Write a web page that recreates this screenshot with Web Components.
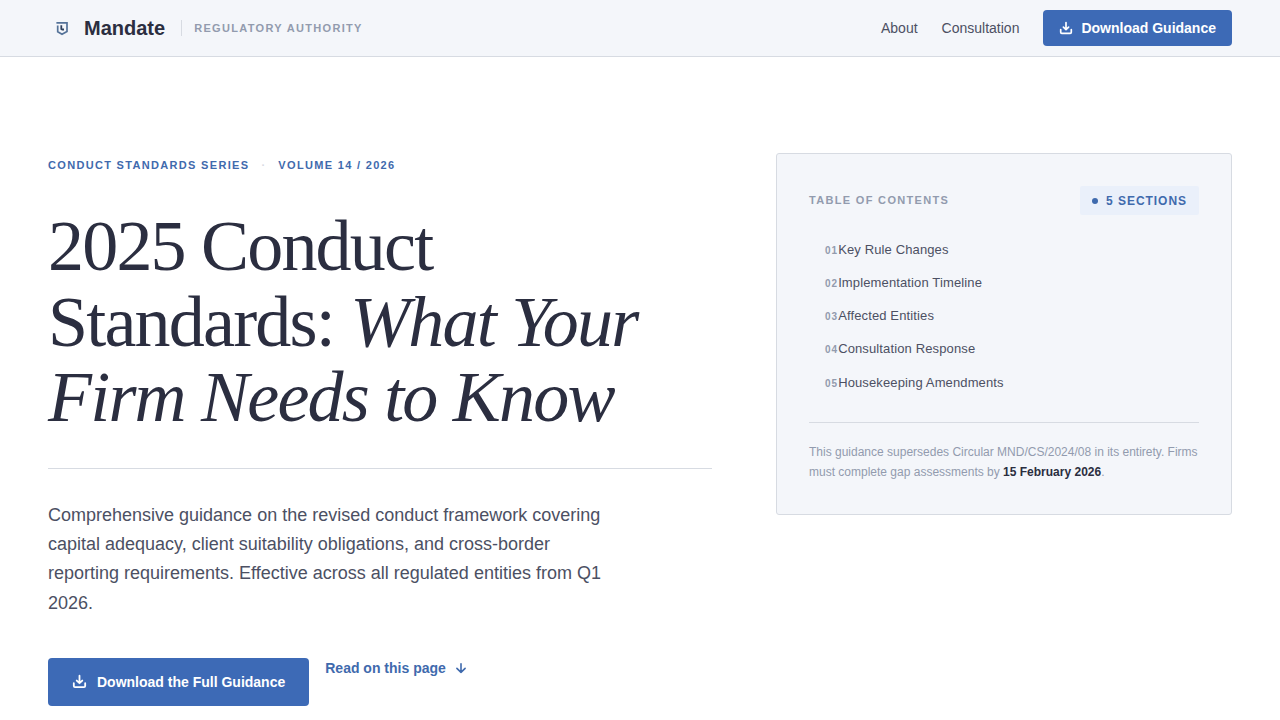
<!DOCTYPE html>
<html lang="en">
<head>
<meta charset="utf-8">
<meta name="viewport" content="width=device-width, initial-scale=1">
<title>Mandate – 2025 Conduct Standards</title>
<style>
:root{--ink:#2b2e40;--body:#4c5063;--muted:#929bae;--blue:#3d6ab6;--link:#3f6aad;--panel:#f4f6fa;--tint:#eaf0fa;--line:#d7dbe2}
body{margin:0;background:#fff;color:var(--body);font-family:"Liberation Sans",Arial,sans-serif;line-height:1.625}
</style>
</head>
<body>
<md-page></md-page>
<script>
const define = (name, html) => {
  const t = document.createElement('template');
  t.innerHTML = html;
  customElements.define(name, class extends HTMLElement {
    constructor() {
      super();
      this.attachShadow({ mode: 'open' }).append(t.content.cloneNode(true));
    }
  });
};

define('md-logo', `
<style>
:host{display:flex;align-items:center;gap:8px}
.mark{display:flex;align-items:center;justify-content:center;width:28px;height:28px}
a{color:var(--ink);font-size:20px;font-weight:700;line-height:28px;text-decoration:none}
</style>
<span class="mark"><svg width="14" height="16" viewBox="0 0 14 16" fill="none" aria-hidden="true">
<path d="M1.4 2.9H12V11.4L7 14.2L2.7 11.8V5.6" stroke="#557399" stroke-width="1.7"/>
<path d="M5.4 5.2V9.4L7 10.4H9V8.6H7.2V5.2Z" fill="#30425f"/>
</svg></span>
<a href="#">Mandate</a>`);

define('md-icon-download', `
<style>:host{display:inline-flex}svg{width:var(--icon-size,14px);height:var(--icon-size,14px)}</style>
<svg viewBox="0 0 14 14" fill="none" stroke="currentColor" stroke-width="1.7" stroke-linecap="round" stroke-linejoin="round" aria-hidden="true">
<path d="M7 1.6V8.4M4.4 6.1L7 8.6L9.6 6.1M1.7 8.6V11.2Q1.7 12.3 2.8 12.3H11.2Q12.3 12.3 12.3 11.2V8.6"/></svg>`);

define('md-button', `
<style>
:host{display:inline-flex}
button{display:flex;align-items:center;gap:8px;height:36px;padding:0 16px;border:0;border-radius:4px;background:var(--blue);color:#fff;font:700 14px/20px "Liberation Sans",Arial,sans-serif;white-space:nowrap;cursor:pointer}
:host([large]) button{--icon-size:15px;height:48px;padding:0 24px;gap:10px}
</style>
<button type="button"><md-icon-download></md-icon-download><slot></slot></button>`);

define('md-header', `
<style>
:host{display:block;background:var(--panel);border-bottom:1px solid var(--line)}
header{display:flex;align-items:center;justify-content:space-between;height:56px;padding:0 48px}
.brand{display:flex;align-items:center}
.tag{display:flex;align-items:center;gap:12px;margin-left:16px;color:var(--muted);font-size:11px;line-height:16px;font-weight:700;letter-spacing:.12em;text-transform:uppercase}
.tag::before{content:"";width:1px;height:16px;background:var(--line)}
nav{display:flex;align-items:center;gap:24px}
nav a{color:var(--body);font-size:14px;text-decoration:none}
</style>
<header>
<div class="brand"><md-logo></md-logo><span class="tag">Regulatory Authority</span></div>
<nav><a href="#about">About</a><a href="#consultation">Consultation</a><md-button>Download Guidance</md-button></nav>
</header>`);

define('md-hero', `
<style>
:host{display:block}
.eyebrow{display:flex;align-items:center;gap:12px;margin:0 0 32px;color:var(--link);font-size:11px;line-height:24px;font-weight:700;letter-spacing:.12em;text-transform:uppercase}
.eyebrow i{color:var(--line);font-style:normal}
h1{margin:0;padding-bottom:32px;border-bottom:1px solid var(--line);color:var(--ink);font:400 72px/1.05 "Liberation Serif","Times New Roman",serif;letter-spacing:-.025em}
.lead{max-width:576px;margin:32px 0 40px;font-size:18px}
.actions{display:flex;align-items:flex-start;gap:16px}
.actions a{display:flex;align-items:center;gap:8px;color:var(--link);font-size:14px;line-height:20px;font-weight:700;text-decoration:none}
</style>
<p class="eyebrow"><span>Conduct Standards Series</span><i>·</i><span>Volume 14 / 2026</span></p>
<h1>2025 Conduct Standards: <em>What Your Firm Needs to Know</em></h1>
<p class="lead">Comprehensive guidance on the revised conduct framework covering capital adequacy, client suitability obligations, and cross-border reporting requirements. Effective across all regulated entities from Q1 2026.</p>
<div class="actions">
<md-button large>Download the Full Guidance</md-button>
<a href="#key-rule-changes">Read on this page <svg width="14" height="14" viewBox="0 0 14 14" fill="none" stroke="currentColor" stroke-width="1.6" stroke-linecap="round" stroke-linejoin="round" aria-hidden="true"><path d="M7 2.8V11.4M2.9 7.4L7 11.4L11.1 7.4"/></svg></a>
</div>`);

define('md-toc-item', `
<style>
:host{display:block}
a{display:flex;align-items:baseline;padding:6px 16px;color:var(--body);font-size:13px;letter-spacing:.01em;text-decoration:none}
span{color:var(--muted);font-size:10px;font-weight:700;letter-spacing:.1em}
</style>
<a href="#section"><span><slot name="number"></slot></span><slot></slot></a>`);

define('md-toc', `
<style>
:host{display:block;padding:32px;border:1px solid var(--line);border-radius:3px;background:var(--panel)}
.head{display:flex;align-items:center;justify-content:space-between;margin-bottom:18px}
h2{margin:0;color:var(--muted);font-size:11px;letter-spacing:.12em;text-transform:uppercase}
.badge{display:flex;align-items:center;gap:8px;padding:5px 12px 4px;border-radius:2px;background:var(--tint);color:var(--link);font-size:12px;line-height:20px;font-weight:700;letter-spacing:.08em;text-transform:uppercase}
.badge::before{content:"";width:6px;height:6px;border-radius:50%;background:currentColor}
p{margin:23px 0 0;padding-top:19px;border-top:1px solid var(--line);color:var(--muted);font-size:12px;line-height:20px}
strong{color:var(--ink)}
</style>
<div class="head"><h2>Table of Contents</h2><span class="badge">5 Sections</span></div>
<nav>
<md-toc-item><span slot="number">01</span>Key Rule Changes</md-toc-item>
<md-toc-item><span slot="number">02</span>Implementation Timeline</md-toc-item>
<md-toc-item><span slot="number">03</span>Affected Entities</md-toc-item>
<md-toc-item><span slot="number">04</span>Consultation Response</md-toc-item>
<md-toc-item><span slot="number">05</span>Housekeeping Amendments</md-toc-item>
</nav>
<p>This guidance supersedes Circular MND/CS/2024/08 in its entirety. Firms must complete gap assessments by <strong>15 February 2026</strong>.</p>`);

define('md-page', `
<style>
:host{display:block}
main{display:grid;grid-template-columns:repeat(12,minmax(0,1fr));column-gap:64px;align-items:start;padding:96px 48px 12px}
md-hero{grid-column:span 7}
md-toc{grid-column:span 5}
</style>
<md-header></md-header>
<main><md-hero></md-hero><md-toc></md-toc></main>`);
</script>
</body>
</html>
